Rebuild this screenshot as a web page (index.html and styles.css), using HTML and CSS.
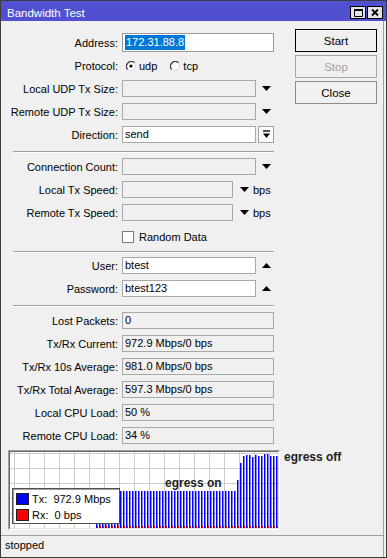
FILE: index.html
```html
<!DOCTYPE html>
<html lang="en">
<head>
    <meta charset="UTF-8">
    <title>Bandwidth Test</title>
    <link rel="stylesheet" href="styles.css">
</head>
<body>
    <div class="window">
        <div class="titlebar">
            <span class="title">Bandwidth Test</span>
            <div class="title-buttons">
                <span class="tbtn">
                    <svg width="9" height="8" viewBox="0 0 9 8"><path d="M0.5 1.5H8.5V7.5H0.5Z M0 0.5H9" fill="none" stroke="#000"/></svg>
                </span>
                <span class="tbtn">
                    <svg width="8" height="7" viewBox="0 0 8 7"><path d="M1 0.5L7 6.5M7 0.5L1 6.5" stroke="#000" stroke-width="1.8"/></svg>
                </span>
            </div>
        </div>

        <div class="client">
            <div class="main">
                <div class="form">
                    <div class="row">
                        <label>Address:</label>
                        <span class="input w-full white tall"><span class="sel">172.31.88.8</span></span>
                    </div>
                    <div class="row">
                        <label>Protocol:</label>
                        <span class="radio">
                            <svg width="10" height="10" viewBox="0 0 10 10"><circle cx="5" cy="5" r="4.5" fill="#fff" stroke="#d8d8d8"/><path d="M1.5 8.5A5 5 0 0 1 8.5 1.5" fill="none" stroke="#404040" stroke-width="1.3"/><circle cx="5" cy="5" r="1.6" fill="#000"/></svg>
                            udp
                        </span>
                        <span class="radio">
                            <svg width="10" height="10" viewBox="0 0 10 10"><circle cx="5" cy="5" r="4.5" fill="#fff" stroke="#d8d8d8"/><path d="M1.5 8.5A5 5 0 0 1 8.5 1.5" fill="none" stroke="#404040" stroke-width="1.3"/></svg>
                            tcp
                        </span>
                    </div>
                    <div class="row">
                        <label>Local UDP Tx Size:</label>
                        <span class="input w-short"></span>
                        <span class="arrow"><svg width="9" height="5" viewBox="0 0 9 5"><path d="M0 0H9L4.5 5Z" fill="#000"/></svg></span>
                    </div>
                    <div class="row">
                        <label>Remote UDP Tx Size:</label>
                        <span class="input w-short"></span>
                        <span class="arrow"><svg width="9" height="5" viewBox="0 0 9 5"><path d="M0 0H9L4.5 5Z" fill="#000"/></svg></span>
                    </div>
                    <div class="row">
                        <label>Direction:</label>
                        <span class="input w-short white">send</span>
                        <span class="drop-btn"><svg width="7" height="9" viewBox="0 0 7 9"><path d="M0 1H7" stroke="#000" stroke-width="1.4"/><path d="M0 3.5H7L3.5 8Z" fill="#000"/></svg></span>
                    </div>

                    <div class="sep"></div>

                    <div class="row">
                        <label>Connection Count:</label>
                        <span class="input w-short"></span>
                        <span class="arrow"><svg width="9" height="5" viewBox="0 0 9 5"><path d="M0 0H9L4.5 5Z" fill="#000"/></svg></span>
                    </div>
                    <div class="row">
                        <label>Local Tx Speed:</label>
                        <span class="input w-speed"></span>
                        <span class="arrow near"><svg width="9" height="5" viewBox="0 0 9 5"><path d="M0 0H9L4.5 5Z" fill="#000"/></svg></span>
                        <span class="unit">bps</span>
                    </div>
                    <div class="row">
                        <label>Remote Tx Speed:</label>
                        <span class="input w-speed"></span>
                        <span class="arrow near"><svg width="9" height="5" viewBox="0 0 9 5"><path d="M0 0H9L4.5 5Z" fill="#000"/></svg></span>
                        <span class="unit">bps</span>
                    </div>
                    <div class="row">
                        <label></label>
                        <span class="checkbox"></span>
                        <span class="check-text">Random Data</span>
                    </div>

                    <div class="sep tight"></div>

                    <div class="row">
                        <label>User:</label>
                        <span class="input w-short white">btest</span>
                        <span class="arrow"><svg width="9" height="5" viewBox="0 0 9 5"><path d="M0 5H9L4.5 0Z" fill="#000"/></svg></span>
                    </div>
                    <div class="row">
                        <label>Password:</label>
                        <span class="input w-short white">btest123</span>
                        <span class="arrow"><svg width="9" height="5" viewBox="0 0 9 5"><path d="M0 5H9L4.5 0Z" fill="#000"/></svg></span>
                    </div>

                    <div class="sep"></div>

                    <div class="row">
                        <label>Lost Packets:</label>
                        <span class="input w-full">0</span>
                    </div>
                    <div class="row">
                        <label>Tx/Rx Current:</label>
                        <span class="input w-full">972.9 Mbps/0 bps</span>
                    </div>
                    <div class="row">
                        <label>Tx/Rx 10s Average:</label>
                        <span class="input w-full">981.0 Mbps/0 bps</span>
                    </div>
                    <div class="row">
                        <label>Tx/Rx Total Average:</label>
                        <span class="input w-full">597.3 Mbps/0 bps</span>
                    </div>
                    <div class="row">
                        <label>Local CPU Load:</label>
                        <span class="input w-full">50 %</span>
                    </div>
                    <div class="row">
                        <label>Remote CPU Load:</label>
                        <span class="input w-full">34 %</span>
                    </div>
                </div>

                <div class="buttons">
                    <button class="default">Start</button>
                    <button class="disabled">Stop</button>
                    <button>Close</button>
                </div>
            </div>

            <div class="graph-row">
                <div class="graph">
                    <div class="plot">
                        <svg width="268" height="76" viewBox="0 0 268 76">
                            <defs>
                                <pattern id="grid" patternUnits="userSpaceOnUse" x="4" y="1" width="15" height="15">
                                    <path d="M0.5 0V15M0 0.5H15" fill="none" stroke="#cdcdcd"/>
                                </pattern>
                                <pattern id="tx" patternUnits="userSpaceOnUse" x="86" y="0" width="3" height="76">
                                    <rect width="1.5" height="76" fill="#0000ff"/>
                                </pattern>
                                <pattern id="rx" patternUnits="userSpaceOnUse" x="87" y="0" width="3" height="76">
                                    <rect width="1" height="76" fill="#ff0000"/>
                                </pattern>
                            </defs>
                            <rect width="268" height="76" fill="#fff"/>
                            <rect width="268" height="76" fill="url(#grid)"/>
                            <rect x="86" y="39" width="141" height="37" fill="url(#tx)"/>
                            <g fill="#0000ff">
                                <rect x="227" y="28" width="1.5" height="48"/>
                                <rect x="230" y="11" width="1.5" height="65"/>
                                <rect x="233" y="4" width="1.5" height="72"/>
                                <rect x="236" y="3" width="1.5" height="73"/>
                                <rect x="239" y="3" width="1.5" height="73"/>
                                <rect x="242" y="5" width="1.5" height="71"/>
                                <rect x="245" y="3" width="1.5" height="73"/>
                                <rect x="248" y="4" width="1.5" height="72"/>
                                <rect x="251" y="4" width="1.5" height="72"/>
                                <rect x="254" y="2" width="1.5" height="74"/>
                                <rect x="257" y="2" width="1.5" height="74"/>
                                <rect x="260" y="4" width="1.5" height="72"/>
                                <rect x="263" y="4" width="1.5" height="72"/>
                                <rect x="266" y="4" width="1.5" height="72"/>
                            </g>
                            <rect x="87" y="74" width="181" height="2" fill="url(#rx)"/>
                        </svg>
                        <span class="egress-on">egress on</span>
                        <div class="legend">
                            <div class="legend-row"><span class="swatch tx"></span><span>Tx:  972.9 Mbps</span></div>
                            <div class="legend-row"><span class="swatch rx"></span><span>Rx:  0 bps</span></div>
                        </div>
                    </div>
                </div>
                <span class="egress-off">egress off</span>
            </div>

            <div class="statusbar">stopped</div>
        </div>
    </div>
</body>
</html>
```

FILE: styles.css
```css
* {
    margin: 0;
    padding: 0;
    box-sizing: border-box;
}

body {
    background: #fff;
    font-family: "Liberation Sans", Arial, sans-serif;
    font-size: 11px;
    color: #000;
}

.window {
    width: 387px;
    height: 558px;
    border: 1px solid #3c3c3c;
    background: #f0f0f0;
    display: flex;
    flex-direction: column;
}

/* title bar */
.titlebar {
    height: 20px;
    flex: none;
    background: #5050d0;
    color: #fff;
    display: flex;
    align-items: flex-end;
    padding: 0 3px 2px 6px;
}

.title {
    flex: 1;
    line-height: 13px;
    margin-bottom: -1px;
    font-size: 11.5px;
}

.title-buttons {
    display: flex;
    gap: 1px;
}

.tbtn {
    width: 16px;
    height: 13px;
    background: #e4e4e4;
    border: 1px solid #000;
    display: flex;
    align-items: center;
    justify-content: center;
}

/* client area */
.client {
    flex: 1;
    display: flex;
    flex-direction: column;
    margin-right: 2px;
    border-right: 1px solid #a0a0a0;
}

.main {
    display: flex;
    align-items: flex-start;
}

.form {
    width: 279px;
    padding-top: 10px;
}

.row {
    height: 23px;
    display: flex;
    align-items: center;
}

.row label {
    width: 117px;
    margin-right: 4px;
    text-align: right;
    white-space: nowrap;
}

.input {
    height: 17px;
    line-height: 15px;
    padding: 0 2px;
    border: 1px solid #a8a8a8;
    background: #f0f0f0;
    white-space: nowrap;
    overflow: hidden;
}

.input.white {
    background: #fff;
}

.input.tall {
    height: 19px;
    line-height: 17px;
    border-color: #9a9a9a;
}

.w-full { width: 152px; }
.w-short { width: 134px; }
.w-speed { width: 111px; }

.sel {
    background: #0078d7;
    color: #fff;
    padding: 1px 1px 2px 1px;
}

.arrow {
    display: flex;
    margin-left: 6px;
}

.arrow.near {
    margin-left: 7px;
}

.unit {
    margin-left: 4px;
}

.drop-btn {
    width: 16px;
    height: 17px;
    margin-left: 2px;
    border: 1px solid #a0a0a0;
    background: #fff;
    display: flex;
    align-items: center;
    justify-content: center;
}

.radio {
    display: flex;
    align-items: center;
    gap: 3px;
    margin-right: 13px;
}

.radio:first-of-type {
    margin-left: 4px;
}

.checkbox {
    width: 12px;
    height: 12px;
    border: 1px solid #7a7a7a;
    background: #fff;
    margin-top: 3px;
}

.check-text {
    margin-left: 5px;
    margin-top: 3px;
}

.sep {
    width: 261px;
    height: 1px;
    margin: 5px 0 3px 12px;
    background: #a0a0a0;
    box-shadow: 0 1px 0 #fff;
}

.sep.tight {
    margin: 4px 0 2px 12px;
}

/* buttons */
.buttons {
    display: flex;
    flex-direction: column;
    gap: 3px;
    padding-top: 8px;
    margin-left: 15px;
}

button {
    width: 82px;
    height: 23px;
    font-family: inherit;
    font-size: 11.5px;
    color: #000;
    background: #f0f0f0;
    border: 1px solid #8c8c8c;
}

button.default {
    border-color: #000;
}

button.disabled {
    color: #a0a0a0;
    border-color: #a8a8a8;
}

/* graph */
.graph-row {
    display: flex;
    align-items: flex-start;
    margin: 3px 0 0 7px;
}

.graph {
    width: 272px;
    height: 80px;
    border: 1px solid;
    border-color: #a0a0a0 #fff #fff #a0a0a0;
}

.plot {
    position: relative;
    width: 270px;
    height: 78px;
    border: 1px solid;
    border-color: #696969 #e3e3e3 #e3e3e3 #696969;
}

.plot svg {
    display: block;
}

.egress-on {
    position: absolute;
    left: 155px;
    top: 24px;
    font-size: 12px;
    font-weight: bold;
    line-height: 14px;
    color: #202020;
}

.egress-off {
    margin-left: 4px;
    font-size: 12px;
    font-weight: bold;
    line-height: 14px;
    color: #202020;
}

.legend {
    position: absolute;
    left: 2px;
    top: 36px;
    width: 108px;
    height: 36px;
    padding: 2px 3px 0;
    background: #fff;
    border: 1px solid #505050;
    box-shadow: inset 1px 1px 0 #a0a0a0;
}

.legend-row {
    height: 16px;
    display: flex;
    align-items: center;
    gap: 3px;
    white-space: pre;
}

.swatch {
    width: 13px;
    height: 12px;
    border: 1px solid #202020;
}

.swatch.tx { background: #0000ff; }
.swatch.rx { background: #ff0000; }

/* status bar */
.statusbar {
    margin-top: auto;
    margin-bottom: 2px;
    height: 20px;
    line-height: 19px;
    padding-left: 4px;
    border-top: 1px solid #a0a0a0;
}
```
